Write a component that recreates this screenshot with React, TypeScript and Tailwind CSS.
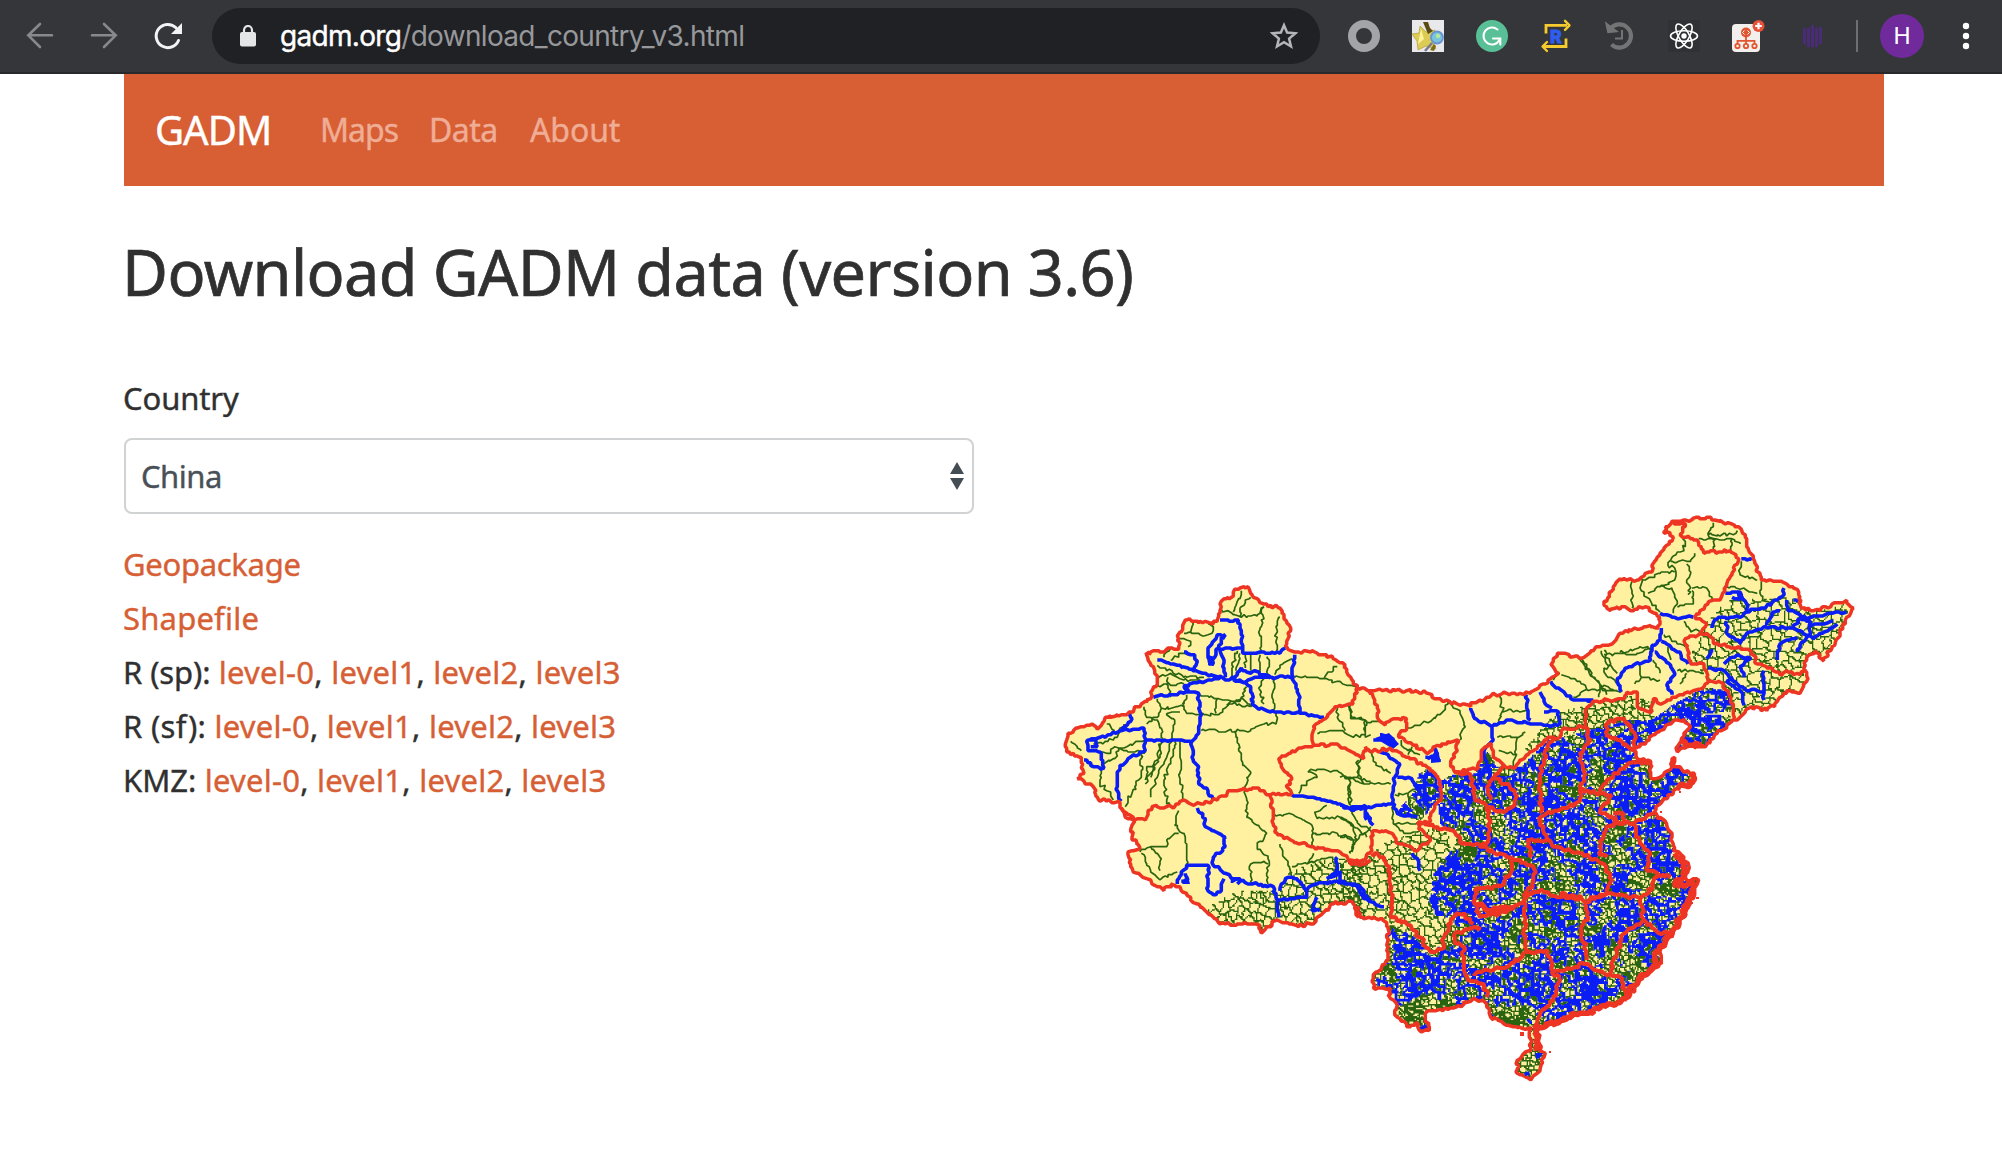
import React from "react";

type Pt = [number, number];

/* ---------- map geometry ---------- */

/* Sheets share one scale (3 units per pixel) and differ in their origin. */
const sheet = (ox: number, oy: number) => (s: string): Pt[] =>
  s.trim().split(/\s+/).map((p) => {
    const [x, y] = p.split(",").map(Number);
    return [ox + x / 3, oy + y / 3] as Pt;
  });
const W = sheet(1050, 570);
const M = sheet(1340, 640);
const N = sheet(1580, 500);

const hash = (x: number, y: number, s: number) => {
  let h = (x * 374761393 + y * 668265263 + s * 1442695041) | 0;
  h = Math.imul(h ^ (h >>> 13), 1274126177);
  h = Math.imul(h ^ (h >>> 15), 2246822519);
  return ((h ^ (h >>> 16)) >>> 0) / 4294967296;
};

/* Smooth value noise, 0..1. */
const noise = (x: number, y: number, size: number, s: number) => {
  const gx = Math.floor(x / size);
  const gy = Math.floor(y / size);
  const fx = x / size - gx;
  const fy = y / size - gy;
  const a = hash(gx, gy, s) * (1 - fx) + hash(gx + 1, gy, s) * fx;
  const b = hash(gx, gy + 1, s) * (1 - fx) + hash(gx + 1, gy + 1, s) * fx;
  return a * (1 - fy) + b * fy;
};

const PX = 4 / 3;

/* Subdivides a polyline and shakes it so that it reads as a surveyed border. */
const rough = (pts: Pt[], amp: number, closed = false): Pt[] => {
  const out: Pt[] = [];
  const n = closed ? pts.length : pts.length - 1;
  for (let i = 0; i < n; i++) {
    const a = pts[i];
    const b = pts[(i + 1) % pts.length];
    const len = Math.hypot(b[0] - a[0], b[1] - a[1]);
    const k = Math.max(1, Math.round(len / 2.6));
    for (let j = 0; j < k; j++) {
      const t = j / k;
      const x = a[0] + (b[0] - a[0]) * t;
      const y = a[1] + (b[1] - a[1]) * t;
      const d = j === 0 ? 0 : amp;
      const qx = Math.round(x * 3);
      const qy = Math.round(y * 3);
      out.push([x + (hash(qx, qy, 1) - 0.5) * d, y + (hash(qx, qy, 2) - 0.5) * d]);
    }
  }
  if (!closed) out.push(pts[pts.length - 1]);
  return out.map(([x, y]) => [Math.round(x / PX) * PX, Math.round(y / PX) * PX] as Pt);
};
const toPath = (pts: Pt[], closed = false) =>
  "M" + pts.map(([x, y]) => x.toFixed(1) + " " + y.toFixed(1)).join("L") + (closed ? "Z" : "");
const lines = (list: Pt[][], amp: number) => list.map((l) => toPath(rough(l, amp))).join("");

const outline: Pt[] = [
  ...W("50,510 60,490 95,468 125,460 140,478 170,440 225,435 270,408 300,385 310,350 322,325 308,290 285,252 345,240 385,236 385,205 410,148 440,155 500,155 508,120 512,95 550,78 555,58 595,50 605,75 640,102 690,115 700,145 718,165 715,205 705,230 740,245 800,248 850,265 885,285 895,315 922,352"),
  ...M("90,150 200,152 260,158 310,182 390,198 440,172 480,162 570,160 630,115 655,100 632,75 650,40 730,52 775,20 815,12"),
  ...N("120,400 200,378 235,385 240,350 195,320 150,330 135,320 90,330 72,315 100,260 120,235 165,242 215,215 215,200 245,155 275,122 270,100 250,95 270,70 310,60 380,52 445,68 480,85 495,105 500,140 520,175 530,205 545,240 590,245 620,252 655,275 665,325 700,332 750,318 800,300 818,325 795,360 775,410 750,450 730,482 705,450 680,470 672,505 685,535 655,580 630,570 560,630 515,620 465,660 410,700 370,740 320,738 290,755 305,715 330,680 310,655 280,665 235,695 200,725 160,745 170,775 210,785 215,835 240,830 275,800 282,770 285,800"),
  ...M("1065,400 1060,430 1010,445 960,490 940,520 975,545 995,590 1000,630 1030,650 1045,690 1040,720 1075,720 1065,760 1035,820 1000,880 960,930 965,970 900,1020 860,1075 800,1100 720,1120 650,1150 590,1165 600,1230 615,1240 600,1290 570,1318 530,1300 530,1260 570,1230 572,1165 500,1155 450,1130 440,1090 400,1075 340,1105 270,1110 255,1120 268,1170 240,1172 235,1150 200,1160 165,1125 170,1095 150,1075 150,1045 100,1045 100,1010 145,960 145,860 120,835 60,830 55,800"),
  ...W("925,1040 905,995 850,1000 790,1060 745,1068 680,1050 650,1070 632,1090 630,1065 560,1062 510,1060 440,1000 375,945 340,962 290,925 250,905 235,845 270,835 245,800 250,750 215,715 205,695 145,690 130,650 80,625 100,610 95,560 60,555 45,520"),
];

const provinces: Pt[][] = [
  W("215,715 225,740 250,750 285,748 305,708 375,710 400,690 430,705 500,690 545,662 620,655 660,672 725,672"),
  W("725,672 710,650 725,625 700,600 685,565 720,548 790,525 860,522 905,545 940,565 945,530 960,545"),
  M("90,335 150,325 200,350 260,380 295,410 305,470 270,520 270,545 230,550 250,575 270,600 230,630 180,610 145,575 100,570 95,630 60,665 20,660"),
  W("660,672 668,740 680,790 720,810 780,830 870,845 900,880 930,885 960,870"),
  W("790,520 790,470 825,445 860,408 910,400 922,352"),
  M("90,150 115,210 115,240 135,255 150,240 200,235 200,260 175,290 220,315 265,340 285,320 350,300 350,330 330,370 345,395 415,385 425,330 455,310 460,350 490,375 520,385 560,345 620,300 660,290 670,265 735,260 735,210 760,185 850,175 860,155 890,155 895,205 935,215 940,175 960,190 1020,165 1080,148"),
  N("360,568 385,540 430,550 450,600 465,655"),
  N("385,540 370,490 330,490 325,450 315,415 355,405 380,400 405,430 480,445 515,455 530,490 560,500 600,525 620,510 660,525 680,510"),
  N("355,405 380,370 345,350 400,300 420,300 440,250 470,190 475,175 450,150 370,158 350,120 300,105 315,70 280,68"),
];

const innerProvinces: Pt[][] = [
  M("345,395 385,400 400,440 405,475 440,500 450,545 445,600 420,620"),
  M("490,375 465,410 440,440 450,480"),
  M("440,500 490,515 525,490 525,450 480,425 465,410"),
  M("640,290 610,360 600,450 605,520"),
  M("735,260 750,300 720,340 735,400 720,440 720,485 600,530 610,580 640,620 720,640 790,670 815,720 800,760 740,785"),
  M("720,450 780,460 800,420 880,365 930,370"),
  M("780,460 815,465 780,510 830,545 880,550 940,520"),
  M("830,545 790,580 775,640 800,650"),
  M("820,520 850,520 850,550 825,550 830,530"),
  M("880,550 900,610 930,640 920,690 990,710"),
  M("250,550 290,560 345,575 365,610 420,620 480,640 530,660 585,680 580,740 550,760"),
  M("520,650 510,700 480,740 410,745 405,790 420,830 480,820 520,800 550,780"),
  M("575,650 560,600 620,600"),
  M("550,760 555,840 555,940"),
  M("550,770 600,750 660,770 725,770 745,830 725,860 740,960"),
  M("740,785 810,760 900,775 940,740 950,700"),
  M("900,775 910,840 850,880 820,960 815,1000"),
  M("910,840 960,880 990,880"),
  M("555,940 500,980 400,1000"),
  M("420,860 345,880 350,910 370,920 370,980 385,1020 430,1030 440,1070"),
  M("555,940 625,930 635,1000 660,1010 640,1080 600,1120 580,1165"),
  M("635,1000 740,970 790,1000 840,1010 860,1070"),
  M("95,640 130,650 150,700 155,790 150,830 200,850 240,890 270,935 310,925 310,890 340,830 370,820 400,850"),
  M("800,290 800,250 850,235 885,280 880,330 840,300 800,290"),
];

const coast: Pt[][] = [
  M("1005,640 1030,670 1035,710 1000,735 1060,730 1040,790 1020,840 985,890 955,930 945,975 895,1020 860,1060 860,1075"),
  M("860,1075 800,1100 720,1120 650,1145 590,1160"),
  M("585,1160 590,1230"),
  M("1050,400 1060,425 1010,445"),
  M("410,790 450,810 520,800"),
  M("660,765 720,775"),
  M("1020,300 1050,315 1085,312"),
];

const prefectures: Pt[][] = [
  W("320,268 380,285 460,310 520,325 590,335 620,320 680,322 728,320"),
  W("510,150 565,150 575,195 578,248 690,250 705,232"),
  W("575,235 510,238 520,270 525,320"),
  W("480,285 475,235 500,195 525,195 505,225 485,285 490,262"),
  W("400,245 435,255 440,275 430,300"),
  W("735,255 728,320 745,375 750,430"),
  W("540,330 575,295 600,310 625,305 660,325"),
  W("550,330 595,345 610,380 600,390 620,415 700,428 750,430 820,443"),
  W("310,380 400,370 445,368 450,440 445,490 425,515 430,570 445,590 445,635 470,655 488,688"),
  W("415,365 400,350 480,330 510,320"),
  W("240,425 245,445 215,480 165,500 110,515 115,540 150,545 160,595 130,590 100,570"),
  W("115,510 135,505 140,530 120,530"),
  W("215,480 280,475 290,510 425,512"),
  W("285,510 285,540 235,565 205,600 200,650 212,695"),
  W("440,715 465,745 465,770 525,800 525,830 490,860 490,885 540,920 600,940 670,950 680,990 685,1040"),
  W("380,940 410,885 475,885 470,955 490,975 515,960 520,925"),
  W("395,935 415,930 405,910"),
  W("540,935 570,925 560,940"),
  W("680,990 770,980 770,960 740,925 715,920 690,960"),
  W("770,960 800,940 860,935 930,950 960,990"),
  W("800,980 785,1020 810,1020"),
  W("860,860 860,915 830,925 870,905"),
  W("725,675 800,685 900,715 945,705 950,750"),
  M("0,495 40,510 155,490 160,440 165,410 180,370 120,335"),
  M("160,490 170,520 230,530"),
  M("100,300 130,300 165,295"),
  M("120,285 150,290 165,310"),
  M("75,515 100,555"),
  M("255,350 290,355 300,362"),
  M("285,325 290,350"),
  M("170,410 215,415 240,460 275,480"),
  M("390,205 405,235 455,260 460,300 430,340 440,380 415,420"),
  M("455,260 500,240 570,250 630,260 660,250 655,215 610,215"),
  M("560,165 560,205 570,240"),
  M("600,155 615,190 635,205"),
  M("630,125 700,180 760,180"),
  M("0,690 0,720 50,740 70,775 130,800"),
  M("215,640 235,665 240,690"),
  N("240,340 290,355 340,350"),
  N("245,385 240,420 215,445 210,480 135,505 110,545 125,575"),
  N("245,425 290,455 325,490"),
  N("225,455 270,495 285,520 260,555 275,585"),
  N("435,280 480,275 500,310 500,335 550,325 610,285 610,265"),
  N("455,290 480,300 475,280"),
  N("620,300 625,330 680,355 750,340 800,335"),
  N("690,375 760,365"),
  N("640,300 660,302"),
  N("395,385 410,355 480,350 500,335"),
  N("480,430 500,400 550,380 640,385 700,415 750,385 770,370"),
  N("440,365 440,400 485,430"),
  N("560,375 580,335 600,330"),
  N("640,385 660,355 690,365 690,400 650,455"),
  N("590,480 600,430 650,410"),
  N("380,475 400,450"),
  N("385,505 430,510 460,545 500,570 550,575 550,510"),
  N("430,490 470,465 510,475 480,500 490,530"),
  N("460,530 440,545 485,575 490,615"),
  N("550,575 550,600"),
  N("485,175 515,180"),
  N("0,600 40,600"),
];

const counties: Pt[][] = [
  W("515,118 575,140 620,138 640,110"),
  W("575,62 560,95 550,125"),
  W("600,80 575,110 570,140"),
  W("640,110 635,150 625,185 635,210 632,248"),
  W("690,140 680,180 678,215 682,250"),
  W("425,155 425,190 475,195 490,175 475,160"),
  W("425,190 400,190"), W("390,205 420,215 415,230"),
  W("340,262 360,235"), W("360,268 395,250 425,255"),
  W("320,285 350,300 400,320 460,322"),
  W("320,325 360,310 400,330 450,330"),
  W("322,345 355,345 360,380"),
  W("355,320 350,345 400,340"),
  W("545,330 548,290 560,240"), W("558,300 570,250"), W("600,300 600,255"), W("630,305 630,255"), W("655,320 655,260"),
  W("585,255 585,295"),
  W("675,315 690,285 725,265"),
  W("735,320 820,325 920,352"), W("820,325 860,288"),
  W("640,325 630,350 640,400"), W("672,325 668,420"),
  W("450,375 500,385 570,395 590,350"),
  W("500,385 498,430"), W("450,435 510,430 545,400 600,410"), W("530,405 575,385 605,410"),
  W("678,425 678,460 640,460 600,482 455,480"),
  W("555,482 565,520 572,570 600,605 590,640 580,665 590,690 590,740 650,790 620,830 655,865 650,910 655,940"),
  W("605,940 600,880 655,880"),
  W("280,410 290,440 320,450 335,475 337,515 330,560 300,620"),
  W("320,385 335,415 400,410 410,375"), W("400,410 410,430 450,435"),
  W("350,430 375,450 365,500 350,560 325,610 300,680"),
  W("335,415 320,440 290,460"), W("350,430 390,425"),
  W("390,515 390,610 398,688"), W("375,515 360,580 340,630 350,690 358,710"),
  W("330,520 320,570 290,600 285,630"),
  W("275,545 272,620 245,670 225,708"),
  W("285,640 300,610 315,590"),
  W("285,510 205,535 195,565 160,580"), W("130,520 175,515 200,500 220,460"),
  W("150,545 180,550 195,530 235,545 285,545"), W("155,590 148,640 180,665 188,688"),
  W("60,515 95,540"), W("195,480 170,460"),
  W("385,720 375,765 405,800 410,870 405,890"),
  W("385,790 355,805 350,830 300,830 270,845"),
  W("300,830 330,860 330,900"), W("275,850 300,900 330,930"), W("330,930 380,905"),
  W("690,820 710,870 725,910"), W("725,890 770,880 790,850"), W("770,880 800,870 850,860"),
  W("745,670 760,645 800,620 775,605 800,598 840,605 860,600 895,625 920,620 925,570"),
  W("895,625 900,705"), W("920,620 960,635"),
  W("672,735 730,735 785,765 790,790 785,830"),
  W("830,705 795,725 800,745 870,740 900,760 950,800"), W("785,790 860,790 910,810 905,845"),
  W("800,488 860,480 910,500 960,495"), W("860,410 865,450 885,480"), W("900,405 900,440 950,455 945,500"),
  M("25,195 35,230 75,240 75,285"), M("75,245 115,245"),
  M("325,185 300,225 240,255 205,265"), M("325,185 360,215 375,260 360,300"),
  M("480,165 488,210 475,250"), M("488,215 560,210"), M("470,290 530,290 555,275"), M("530,290 520,380"), M("475,330 530,345"),
  M("90,335 100,365 150,400"), M("0,410 40,415 70,430 150,430"), M("30,430 30,495"), M("60,350 55,390 70,430"),
  M("165,465 205,460 210,510"), M("205,460 240,440"),
  M("155,500 160,550 250,550"), M("160,550 190,580 240,570"),
  M("185,300 190,325 240,345"), M("215,320 205,345"),
  M("0,530 40,555 50,600 30,640"), M("30,510 60,555 95,575"), M("0,590 50,600 90,560"),
  M("665,105 720,125 745,150 700,170"), M("720,60 760,110 800,165"), M("790,30 810,70 790,95 830,130"), M("790,45 850,40 900,20 935,30"),
  M("745,150 830,150"), M("660,100 640,120"),
  N("155,245 155,325"), N("185,235 185,270 215,310 240,335"), N("185,240 240,220 285,215"),
  N("315,110 310,150 270,180 265,195 285,205 285,240 240,260 205,280"),
  N("270,185 330,185 345,160"), N("320,190 330,215 320,240 330,265 325,285"), N("335,265 380,265 395,300"),
  N("240,260 275,265 290,310 280,340"), N("290,320 340,310 335,270"),
  N("400,68 385,105 405,120 400,155"), N("355,115 405,120 455,115 450,150"), N("385,105 460,105 470,90"), N("455,115 480,130"),
  N("485,185 480,225 530,240"), N("545,245 540,280 555,305 590,300"), N("440,260 490,265 530,280"),
  N("65,450 80,490 110,520"), N("120,455 140,465 215,445"), N("0,470 40,530 60,560 55,590"),
  N("175,490 185,530 165,550"), N("185,530 240,540"), N("220,480 240,520"), N("60,555 125,575"),
  N("265,440 270,480"), N("310,365 330,390 360,395"), N("250,405 300,430 315,440"), N("290,510 370,520"), N("300,550 320,520"),
];

/* ---------- dense county mosaics ---------- */

interface Zone { poly: Pt[]; cell: number; pref: number; dense: boolean; seed: number }

const zones: Zone[] = [
  { poly: M("235,400 260,385 300,420 340,400 400,400 425,360 440,330 470,380 540,380 620,300 740,270 860,240 930,240 1000,190 1090,140 1160,150 1190,240 1100,440 1100,1190 80,1190 80,1000 150,850 240,900 300,920 330,830 260,820 280,700 340,620 350,590 300,550 290,480 240,540 165,520 220,450"), cell: 5, pref: 10.5, dense: true, seed: 7 },
  { poly: M("500,1190 650,1190 650,1340 500,1340"), cell: 4.5, pref: 999, dense: false, seed: 21 },
  { poly: M("740,190 870,165 960,190 930,250 860,250 740,270 640,290 540,340 640,220"), cell: 7, pref: 999, dense: false, seed: 11 },
  { poly: M("0,670 80,650 140,600 290,560 345,590 340,620 280,700 260,820 330,830 300,920 240,900 150,850 0,830"), cell: 8.5, pref: 999, dense: false, seed: 3 },
  { poly: W("470,1010 560,960 680,960 720,900 850,860 960,880 960,1100 470,1100"), cell: 8, pref: 999, dense: false, seed: 5 },
  { poly: N("380,360 440,300 620,290 740,330 820,290 740,490 560,640 460,660 430,550 385,540 340,490 330,420 360,410"), cell: 10, pref: 999, dense: false, seed: 9 },
];

/* Centres where prefecture borders crowd together: x, y, radius. */
const hubs: [number, number, number][] = [
  [1458, 878, 26], [1474, 905, 20], [1575, 826, 22], [1630, 790, 26], [1662, 858, 18],
  [1587, 880, 20], [1560, 915, 22], [1625, 905, 16], [1565, 770, 16], [1462, 795, 20],
  [1480, 945, 18], [1530, 985, 22], [1590, 995, 20], [1650, 945, 16], [1425, 975, 22],
  [1705, 712, 22], [1520, 815, 18], [1615, 765, 14], [1665, 905, 12], [1420, 788, 12],
];

const inside = (poly: Pt[], x: number, y: number) => {
  let c = false;
  for (let i = 0, j = poly.length - 1; i < poly.length; j = i++) {
    const [xi, yi] = poly[i];
    const [xj, yj] = poly[j];
    if (yi > y !== yj > y && x < ((xj - xi) * (y - yi)) / (yj - yi) + xi) c = !c;
  }
  return c;
};

const nearest = (x: number, y: number, size: number, seed: number) => {
  const gx = Math.floor(x / size);
  const gy = Math.floor(y / size);
  let best = 1e9;
  let r: [number, number, number] = [0, 0, 0];
  for (let i = gx - 1; i <= gx + 1; i++)
    for (let j = gy - 1; j <= gy + 1; j++) {
      const sx = (i + hash(i, j, seed)) * size;
      const sy = (j + hash(i, j, seed + 50)) * size;
      const d = (sx - x) ** 2 + (sy - y) ** 2;
      if (d < best) {
        best = d;
        r = [i * 4096 + j, sx, sy];
      }
    }
  return r;
};

const mosaic = () => {
  let green = "";
  let blue = "";
  for (const z of zones) {
    const xs = z.poly.map((p) => p[0]);
    const ys = z.poly.map((p) => p[1]);
    const x0 = Math.floor(Math.min(...xs) / PX);
    const y0 = Math.floor(Math.min(...ys) / PX);
    const w = Math.ceil(Math.max(...xs) / PX) - x0;
    const h = Math.ceil(Math.max(...ys) / PX) - y0;
    const c = new Int32Array(w * h);
    const p = new Int32Array(w * h);
    for (let j = 0; j < h; j++)
      for (let i = 0; i < w; i++) {
        const X = (x0 + i) * PX;
        const Y = (y0 + j) * PX;
        const wx = X + (noise(X, Y, 3, 61) - 0.5) * 4;
        const wy = Y + (noise(X, Y, 3, 62) - 0.5) * 4;
        const [id, sx, sy] = nearest(wx, wy, z.cell, z.seed);
        c[j * w + i] = id;
        p[j * w + i] = nearest(sx, sy, z.pref, z.seed + 100)[0];
      }
    for (let j = 0; j < h - 3; j++) {
      let run = 0;
      let kind = 0;
      for (let i = 0; i < w - 3; i++) {
        const k = j * w + i;
        const X = (x0 + i) * PX;
        const Y = (y0 + j) * PX;
        let t = 0;
        if (inside(z.poly, X, Y)) {
          let n = 0;
          if (z.dense) {
            n = noise(X, Y, 10, 33) - 0.04;
            for (const [hx, hy, hr] of hubs) {
              const q = 1 - Math.hypot(X - hx, Y - hy) / hr;
              if (q > 0) n += Math.min(0.28, q * 0.6);
            }
          }
          const m = z.dense ? noise(X, Y, 8, 44) : 0;
          const differs = (a: Int32Array, r: number) => {
            for (let q = 1; q <= r; q++) if (a[k] !== a[k + q] || a[k] !== a[k + q * w]) return true;
            return false;
          };
          const reach = n < 0.34 ? 0 : n < 0.6 ? 2 : 3;
          if (differs(p, reach)) t = 2;
          else if (differs(c, m > 0.6 ? 2 : 1)) t = 1;
        }
        if (t !== kind) {
          if (kind && run) {
            const d = `M${(X - run * PX).toFixed(1)} ${Y.toFixed(1)}h${(run * PX).toFixed(1)}v1.4h-${(run * PX).toFixed(1)}z`;
            if (kind === 1) green += d;
            else blue += d;
          }
          run = 0;
          kind = t;
        }
        run++;
      }
    }
  }
  return { green, blue };
};

const cells = mosaic();
const land = toPath(rough(outline, 3.4, true), true);

const RED = "#ee3524";
const BLUE = "#0a1df5";
const GREEN = "#2a6410";

function CountryMap() {
  return (
    <svg className="block h-[590px] w-[816px]" viewBox="1050 504 816 590" fill="none" strokeLinejoin="bevel">
      <clipPath id="land"><path d={land} /></clipPath>
      <path d={land} fill="#fff1a0" />
      <g clipPath="url(#land)">
        <path d={cells.green} fill={GREEN} />
        <path d={lines(counties, 3)} stroke={GREEN} strokeWidth="1.7" />
        <path d={cells.blue} fill={BLUE} />
        <path d={lines(prefectures, 2.4)} stroke={BLUE} strokeWidth="3.6" />
        <path d="M1375 738l14-5 10 11-6 5zM1431 757l6-9 4 14-10 1zM1182 884l6-8 2 8zM1333 876l4-9 4 9zM1208 655l7 2-2 9-5-1z" fill={BLUE} />
      </g>
      <path d={lines(provinces, 3.2)} stroke={RED} strokeWidth="3.5" />
      <path d={lines(innerProvinces, 4)} stroke={RED} strokeWidth="4" />
      <path d={land} stroke={RED} strokeWidth="3.5" />
      <path d={lines(coast, 5)} stroke={RED} strokeWidth="5.5" />
      <path d="M1679 791h2v2h-2zM1660 811h2v2h-2zM1549 1051h2v2h-2zM1520 1032h4v4h-4zM1696 897h3v2h-3zM1690 902h3v2h-3z" fill={RED} />
      <path d="M1535 1053l8 0-3 5-4 1zM1524 1073l5-2 1 4-5 1z" fill={BLUE} />
    </svg>
  );
}

/* ---------- browser toolbar ---------- */

function Slot({ children }: { children: React.ReactNode }) {
  return <div className="flex h-[72px] w-16 shrink-0 items-center justify-center">{children}</div>;
}

function Icon({ children }: { children: React.ReactNode }) {
  return <svg className="h-9 w-9" viewBox="0 0 36 36" fill="none">{children}</svg>;
}

function Toolbar() {
  return (
    <header className="flex h-[74px] items-start border-b-2 border-[#27292b] bg-[#35363a] pl-2 font-[Inter,sans-serif]">
      <Slot><Icon><path d="M30 17.3H6M18 6 6.3 17.3 18 29" stroke="#88898c" strokeWidth="2.6" strokeLinecap="round" /></Icon></Slot>
      <Slot><Icon><path d="M6 17.3h24M18 6l11.7 11.3L18 29" stroke="#88898c" strokeWidth="2.6" strokeLinecap="round" /></Icon></Slot>
      <Slot>
        <Icon>
          <path d="M28.5 22.5A11.6 11.6 0 1 1 26 9.8" stroke="#f1f3f4" strokeWidth="3" strokeLinecap="round" />
          <path d="M32 5v11H21z" fill="#f1f3f4" />
        </Icon>
      </Slot>
      <div className="mt-2 ml-3 flex h-14 w-[1108px] items-center rounded-full bg-[#202124] pr-[22px] pl-7">
        <svg className="h-[22px] w-4" viewBox="0 0 16 22" fill="none">
          <rect y="7" width="16" height="14.5" rx="2" fill="#e4e5e7" />
          <path d="M4 8V5a4 4 0 0 1 8 0v3" stroke="#e4e5e7" strokeWidth="2.2" />
        </svg>
        <span className="ml-6 text-[28px] leading-none tracking-[-0.68px] whitespace-nowrap text-white">
          <span className="[-webkit-text-stroke:0.4px_white]">gadm.org</span><span className="text-[#97989b]">/download_country_v3.html</span>
        </span>
        <svg className="ml-auto h-7 w-7" viewBox="0 0 28 28" fill="none">
          <path d="M14 3.2l3.1 7.4 8.2.7-6.2 5.3 1.9 7.9-7-4.2-7 4.2 1.9-7.9-6.2-5.3 8.2-.7z" stroke="#b4b5b8" strokeWidth="2.5" />
        </svg>
      </div>
      <div className="ml-3 flex">
        <Slot><Icon><circle cx="18" cy="18" r="12" stroke="#a3a4a7" strokeWidth="8" /></Icon></Slot>
        <Slot>
          <Icon>
            <path d="M2 2h32v32H2z" fill="#e9e9ec" />
            <path d="M10 8l6 6 9-2-4 9 5 10-10-3-8 4-1-9-5-7 7-1z" fill="#dccb55" stroke="#b8a540" strokeWidth=".8" />
            <path d="M13 4h5l2 6 3 3-5 3z" fill="#5a4c12" />
            <path d="M11 11l3 10-6 5z" fill="#fff29a" />
            <path d="M22 25l-7 8" stroke="#7b7c88" strokeWidth="2.6" />
            <path d="M20 32l4-6 2 2-2 5z" fill="#7d6c18" />
            <circle cx="27" cy="19.5" r="6" fill="#79c4dd" stroke="#6a93d2" strokeWidth="1.8" />
            <circle cx="28" cy="18" r="2.2" fill="#b6e79a" />
          </Icon>
        </Slot>
        <Slot>
          <Icon>
            <circle cx="18" cy="18" r="16" fill="#58bf96" />
            <path d="M23.5 11.5A8.5 8.5 0 1 0 25.5 22M19 20.5h7.3v6" stroke="#fff" strokeWidth="2.1" strokeLinecap="round" />
          </Icon>
        </Slot>
        <Slot>
          <Icon>
            <path d="M8 15.5V7.3h21M28 20.5v8H6" stroke="#f6cb2f" strokeWidth="2.8" />
            <path d="M27 2.8l4.5 4.5-4.5 4.5M9 24l-4.5 4.5L9 33" stroke="#f6cb2f" strokeWidth="2.4" strokeLinecap="round" strokeLinejoin="round" />
            <text x="12" y="24.5" fontSize="18" fontWeight="900" fontFamily="Roboto, sans-serif" fill="#2e5df0" stroke="#2e5df0" strokeWidth=".8">R</text>
          </Icon>
        </Slot>
        <Slot>
          <Icon>
            <path d="M8.5 10.5A11.6 11.6 0 1 1 9.5 26.5" stroke="#737476" strokeWidth="4.2" />
            <path d="M4 5l2 9.5 9-1z" fill="#737476" stroke="#737476" strokeWidth="1.5" />
            <path d="M20 12v8.5h-7" stroke="#737476" strokeWidth="2" />
          </Icon>
        </Slot>
        <Slot>
          <Icon>
            <path d="M2 2h32v32H2z" fill="#303134" />
            <g stroke="#fff" strokeWidth="1.6">
              <ellipse cx="18" cy="18" rx="13.5" ry="5.2" />
              <ellipse cx="18" cy="18" rx="13.5" ry="5.2" transform="rotate(60 18 18)" />
              <ellipse cx="18" cy="18" rx="13.5" ry="5.2" transform="rotate(120 18 18)" />
            </g>
            <circle cx="18" cy="18" r="2.7" fill="#fff" />
          </Icon>
        </Slot>
        <Slot>
          <Icon>
            <rect x="2" y="6" width="28" height="28" rx="4" fill="#f2efed" />
            <circle cx="16" cy="14.5" r="5" fill="#e2562f" />
            <path d="M14.5 12.5l-2 2 2 2M17.5 12.5l2 2-2 2" stroke="#fff" strokeWidth="1" />
            <path d="M16 19v8M7.5 27v-4.2h17V27" stroke="#e2562f" strokeWidth="1.8" />
            <g stroke="#e2562f" strokeWidth="1.8" fill="#f2efed">
              <circle cx="7.5" cy="28" r="2.2" /><circle cx="16" cy="28" r="2.2" /><circle cx="24.5" cy="28" r="2.2" />
            </g>
            <circle cx="28.5" cy="8" r="6" fill="#e8503a" />
            <path d="M28.5 4.7v6.6M25.2 8h6.6" stroke="#fff" strokeWidth="2.2" />
          </Icon>
        </Slot>
        <Slot>
          <Icon>
            <path d="M10.5 11v14M14.5 11v17M18.5 8v20M22.5 11v17M26.5 10v15" stroke="#50298a" strokeWidth="3" strokeLinecap="round" opacity=".75" />
          </Icon>
        </Slot>
      </div>
      <div className="mt-5 ml-3 h-8 w-0.5 bg-[#6d6e71]" />
      <div className="mt-3.5 ml-[22px] flex h-11 w-11 items-center justify-center rounded-full bg-[#702a9c] font-[Roboto,sans-serif] text-[24px] leading-none text-white">H</div>
      <svg className="mt-[18px] ml-6 h-9 w-9" viewBox="0 0 36 36" fill="#fff">
        <circle cx="18" cy="8" r="3.2" /><circle cx="18" cy="18" r="3.2" /><circle cx="18" cy="28" r="3.2" />
      </svg>
    </header>
  );
}

/* ---------- page ---------- */

function Levels({ children }: { children: React.ReactNode }) {
  return (
    <p className="tracking-[0.24px]">
      {children}{" "}
      {["level-0", "level1", "level2", "level3"].map((l, i) => (
        <React.Fragment key={l}>
          {i > 0 && ", "}
          <a className="text-[#d75f35]">{l}</a>
        </React.Fragment>
      ))}
    </p>
  );
}

export default function App() {
  return (
    <div className="h-[1150px] w-[2002px] overflow-hidden bg-white font-['Noto_Sans',sans-serif] text-[#303030]">
      <Toolbar />
      <div className="ml-[124px] w-[1760px]">
        <nav className="flex h-28 items-center bg-[#d85e33] pl-[31px] whitespace-nowrap [-webkit-text-stroke:0.4px]">
          <span className="w-[165px] text-[40px] leading-none tracking-[-1px] text-white">GADM</span>
          <span className="w-[109px] text-[32px] leading-none tracking-[-1px] text-[#efad96]">Maps</span>
          <span className="w-[101px] text-[32px] leading-none tracking-[-0.5px] text-[#efad96]">Data</span>
          <span className="text-[32px] leading-none tracking-[-0.1px] text-[#efad96]">About</span>
        </nav>
        <h1 className="mt-11 -ml-0.5 h-[84px] text-[63px] leading-[84px] tracking-[-0.6px] whitespace-nowrap [-webkit-text-stroke:0.7px]">Download GADM data (version 3.6)</h1>
        <div className="flex items-start">
          <section className="mt-[57px] w-[850px] text-[31px] leading-[54px] whitespace-nowrap [-webkit-text-stroke:0.4px]">
            <p className="-ml-px tracking-[-0.1px]">Country</p>
            <div className="mt-[13px] mb-[23px] flex h-[76px] items-center justify-between rounded-lg border-2 border-[#d0d2d4] pr-2 pl-[15px] text-[#495057]">
              <span className="tracking-[-0.5px]">China</span>
              <svg className="h-[30px] w-[14px]" viewBox="0 0 14 30" fill="#454d54"><path d="M7 1l7 12H0zM7 29l7-12H0z" /></svg>
            </div>
            <div className="-ml-px">
              <p><a className="tracking-[-0.3px] text-[#d75f35]">Geopackage</a></p>
              <p><a className="tracking-[0.2px] text-[#d75f35]">Shapefile</a></p>
              <Levels><span className="tracking-[-0.1px]">R (sp):</span></Levels>
              <Levels><span className="tracking-[0.3px]">R (sf):</span></Levels>
              <Levels><span className="tracking-[0px]">KMZ:</span></Levels>
            </div>
          </section>
          <div className="mt-[190px] ml-[76px]"><CountryMap /></div>
        </div>
      </div>
    </div>
  );
}
